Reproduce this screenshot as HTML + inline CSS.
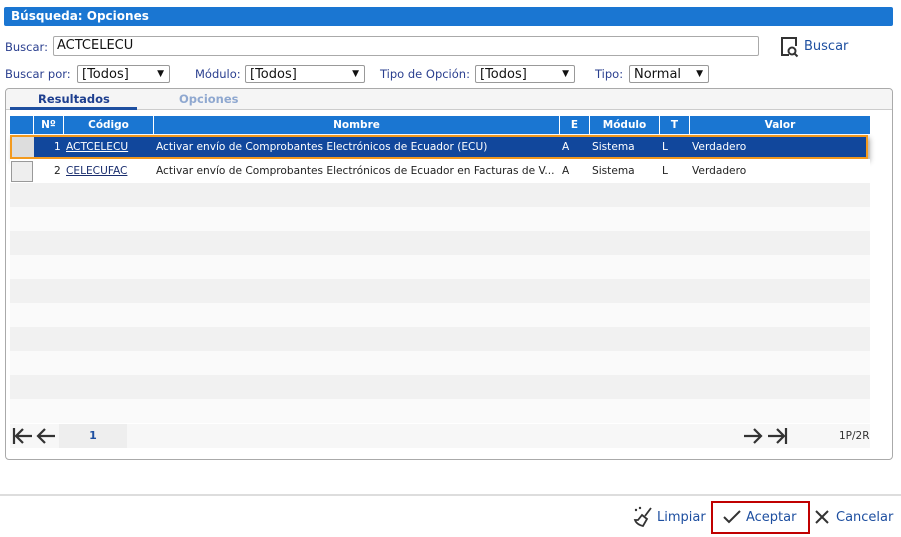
<!DOCTYPE html>
<html><head><meta charset="utf-8"><style>
*{box-sizing:border-box;margin:0;padding:0}
body{width:901px;height:537px;background:#fff;font-family:"DejaVu Sans","Liberation Sans",sans-serif;font-size:12px;color:#222;position:relative;overflow:hidden}
.a{position:absolute}
.hdr{left:4px;top:7px;width:889px;height:19px;background:#1a76d2;color:#fff;font-weight:bold;font-size:12px;padding:2px 7px;border-radius:2px}
.lbl{color:#2a3f8f;font-size:11.5px}
.sel{border:1px solid #999;border-radius:2px;height:18px;font-size:13px;padding:0 4px;background:#fff;color:#111;line-height:17px}
.sel b{position:absolute;right:5px;top:0;font-size:9px}
.grid{left:10px;width:860px}
.th{top:116px;height:18px;background:#1a76d2;color:#fff;font-weight:bold;font-size:10.5px;text-align:center;line-height:19px;border-right:1px solid #fff}
.r{height:24px;line-height:25px;font-size:10.6px}
.c{position:absolute;top:0;white-space:nowrap}
</style></head><body>
<div class="a hdr">Búsqueda: Opciones</div>
<div class="a lbl" style="left:5px;top:40px">Buscar:</div>
<div class="a" style="left:53px;top:36px;width:706px;height:20px;border:1px solid #aaa;border-radius:2px;font-size:13px;padding:1px 3px;color:#111">ACTCELECU</div>
<svg class="a" style="left:780px;top:36px" width="20" height="22" viewBox="0 0 20 22"><path d="M9 2H2v17h7M9 2h7v8" fill="none" stroke="#333" stroke-width="2"/><circle cx="12" cy="15" r="3.5" fill="none" stroke="#333" stroke-width="2"/><path d="M14.5 17.5l3 3" stroke="#333" stroke-width="2"/></svg>
<div class="a" style="left:804px;top:39px;color:#1e4fa0;font-size:13px">Buscar</div>
<div class="a lbl" style="left:5px;top:67px">Buscar por:</div>
<div class="a sel" style="left:77px;top:65px;width:93px">[Todos]<b>▼</b></div>
<div class="a lbl" style="left:195px;top:67px">Módulo:</div>
<div class="a sel" style="left:245px;top:65px;width:120px">[Todos]<b>▼</b></div>
<div class="a lbl" style="left:380px;top:67px">Tipo de Opción:</div>
<div class="a sel" style="left:475px;top:65px;width:100px">[Todos]<b>▼</b></div>
<div class="a lbl" style="left:595px;top:67px">Tipo:</div>
<div class="a sel" style="left:629px;top:65px;width:80px">Normal<b>▼</b></div>
<div class="a" style="left:5px;top:88px;width:888px;height:372px;border:1px solid #aaa;border-radius:4px"></div>
<div class="a" style="left:6px;top:89px;width:886px;height:21px;background:#f5f5f5;border-bottom:1px solid #ccc;border-radius:4px 4px 0 0"></div>
<div class="a" style="left:38px;top:92px;font-weight:bold;color:#1e3f8f;font-size:11.5px">Resultados</div>
<div class="a" style="left:10px;top:107px;width:127px;height:3px;background:#1e4fa0"></div>
<div class="a" style="left:179px;top:92px;font-weight:bold;color:#8fa8d0;font-size:11.5px">Opciones</div>
<div class="a th" style="left:10px;width:24px"></div>
<div class="a th" style="left:34px;width:30px">Nº</div>
<div class="a th" style="left:64px;width:90px">Código</div>
<div class="a th" style="left:154px;width:406px">Nombre</div>
<div class="a th" style="left:560px;width:30px">E</div>
<div class="a th" style="left:590px;width:70px">Módulo</div>
<div class="a th" style="left:660px;width:30px">T</div>
<div class="a th" style="left:690px;width:180px;border:none">Valor</div>
<div class="a grid" style="top:135px;height:288px;background:repeating-linear-gradient(#f1f1f1 0 24px,#fafafa 24px 48px)"></div>
<div class="a grid r" style="top:135px;background:#11479c;color:#fff;border:2px solid #f39a1e;left:10px;width:858px;box-shadow:2px 3px 5px rgba(0,0,0,.3)">
<span class="c" style="left:0;top:0;width:22px;height:20px;background:#ddd"></span>
<span class="c" style="left:42px;top:-2px">1</span><span class="c" style="left:54px;top:-2px;text-decoration:underline">ACTCELECU</span>
<span class="c" style="left:144px;top:-2px">Activar envío de Comprobantes Electrónicos de Ecuador (ECU)</span>
<span class="c" style="left:550px;top:-2px">A</span><span class="c" style="left:580px;top:-2px">Sistema</span><span class="c" style="left:650px;top:-2px">L</span><span class="c" style="left:680px;top:-2px">Verdadero</span></div>
<div class="a grid r" style="top:159px;background:#fff">
<span class="c" style="left:1px;top:2px;width:22px;height:21px;border:1px solid #999;background:#eee"></span>
<span class="c" style="left:44px">2</span><span class="c" style="left:56px;text-decoration:underline;color:#1a2e6e">CELECUFAC</span>
<span class="c" style="left:146px;width:402px;overflow:hidden">Activar envío de Comprobantes Electrónicos de Ecuador en Facturas de V...</span>
<span class="c" style="left:552px">A</span><span class="c" style="left:582px">Sistema</span><span class="c" style="left:652px">L</span><span class="c" style="left:682px">Verdadero</span></div>
<div class="a" style="left:10px;top:424px;width:860px;height:24px;background:#f7f7f7"></div>
<div class="a" style="left:59px;top:424px;width:68px;height:24px;background:#eee;text-align:center;line-height:24px;font-weight:bold;color:#1e4fa0;font-size:11px">1</div>
<svg class="a" style="left:12px;top:427px" width="46" height="18" viewBox="0 0 46 18"><g fill="none" stroke="#333" stroke-width="2.2"><path d="M2 1v16M20 9H4M11 2L4 9l7 7"/><path d="M43 9H26M33 2l-7 7 7 7"/></g></svg>
<svg class="a" style="left:742px;top:427px" width="46" height="18" viewBox="0 0 46 18"><g fill="none" stroke="#333" stroke-width="2.2"><path d="M2 9h17M12 2l7 7-7 7"/><path d="M44 1v16M26 9h16M35 2l7 7-7 7"/></g></svg>
<div class="a" style="left:839px;top:430px;font-size:10.5px;color:#333">1P/2R</div>
<div class="a" style="left:0;top:494px;width:901px;height:2px;background:#ddd"></div>
<svg class="a" style="left:633px;top:506px" width="20" height="22" viewBox="0 0 20 22"><g fill="none" stroke="#333" stroke-width="1.8"><path d="M18 2l-6 8"/><path d="M9 9l5 4-4 7c-4-1-7-3-8-6l3 0 4-5z"/></g><circle cx="3" cy="4" r="1.2" fill="#333"/><circle cx="7" cy="2" r="1.2" fill="#333"/></svg>
<div class="a" style="left:657px;top:510px;color:#1e4fa0;font-size:13px">Limpiar</div>
<div class="a" style="left:711px;top:501px;width:99px;height:33px;border:2px solid #c00000"></div>
<svg class="a" style="left:722px;top:509px" width="20" height="16"><path d="M2 8l5 5L18 2" fill="none" stroke="#333" stroke-width="2"/></svg>
<div class="a" style="left:746px;top:510px;color:#1e4fa0;font-size:13px">Aceptar</div>
<svg class="a" style="left:814px;top:509px" width="16" height="16"><path d="M2 2l12 12M14 2L2 14" stroke="#333" stroke-width="2"/></svg>
<div class="a" style="left:836px;top:510px;color:#1e4fa0;font-size:13px">Cancelar</div>
</body></html>
